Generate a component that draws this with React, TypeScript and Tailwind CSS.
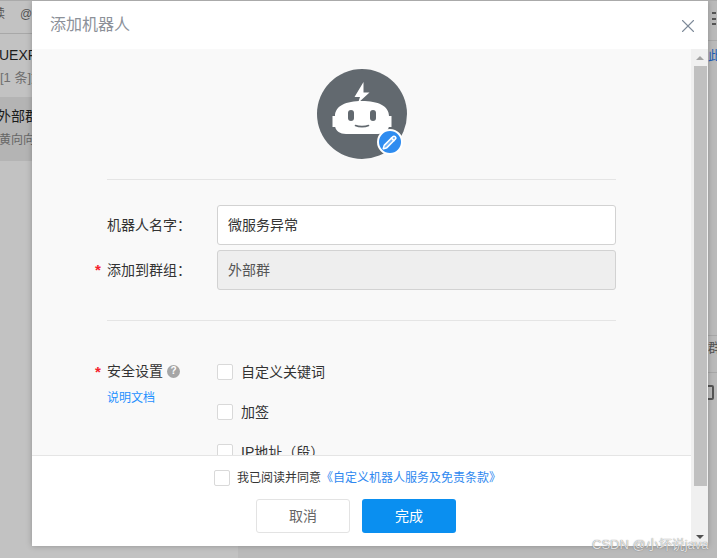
import { Pencil, X } from "lucide-react";

const font = { fontFamily: '"Liberation Sans", "Noto Sans CJK SC", sans-serif' };

function RobotAvatar() {
  return (
    <div className="relative h-[90px] w-[90px]">
      <svg viewBox="0 0 90 90" className="h-[90px] w-[90px]">
        <circle cx="45" cy="45" r="45" fill="#62696f" />
        <path d="M46.500 13 37.500 28H43L41 34 52.500 23.500H46.500Z" fill="#fff" />
        <path d="M18 47C18 37 29 32 45 32S72 37 72 47H74.500V58H71.800C71 62 67 65 61 65H29C23 65 19 62 18.200 58H15.500V47Z" fill="#fff" />
        <rect x="31" y="41" width="6" height="11" rx="3" fill="#62696f" />
        <rect x="53" y="41" width="6" height="11" rx="3" fill="#62696f" />
        <path d="M38.500 56.500C42 58 48 58 51.500 56.500" stroke="#62696f" strokeWidth="1.600" strokeLinecap="round" fill="none" />
      </svg>
      <div className="absolute left-[60px] top-[60px] flex h-[26px] w-[26px] items-center justify-center rounded-full border-2 border-white bg-[#2e8cf0]">
        <Pencil className="h-[15px] w-[15px] text-white" fill="#fff" fillOpacity={0.35} strokeWidth={2.4} />
      </div>
    </div>
  );
}

function Checkbox() {
  return <span className="block h-4 w-4 shrink-0 rounded-[2px] border border-[#d9d9d9] bg-white" />;
}

function Required() {
  return <span className="absolute left-[-12px] top-[-1px] text-[15px] font-bold text-[#f5222d]">*</span>;
}

function SecurityOption({ label }: { label: string }) {
  return (
    <div className="flex h-4 items-center gap-2 text-[14px] text-[#333]">
      <Checkbox />
      <span>{label}</span>
    </div>
  );
}

function BackgroundPage() {
  return (
    <div className="flex h-full w-full bg-[#bababa]">
      <div className="w-[238px] shrink-0 overflow-hidden bg-[#c2c2c2] text-[14px]">
        <div className="flex h-[33px] items-center gap-[15px] border-b border-[#a8a8a8] pb-[6px] text-[12px] text-[#555]">
          <span className="-ml-[7px]">读</span>
          <span>@</span>
        </div>
        <div className="h-[63px] whitespace-nowrap pt-[10px]">
          <div className="-ml-[1px] text-[14px] leading-[22px] text-[#1c1c1c]">UEXP</div>
          <div className="mt-[3px] text-[13px] leading-[18px] text-[#707070]">[1 条]文</div>
        </div>
        <div className="h-[64px] whitespace-nowrap bg-[#b4b4b4] pt-[9px]">
          <div className="-ml-[3px] text-[14px] text-[#1c1c1c]">外部群</div>
          <div className="mt-[4px] -ml-[1px] text-[12px] text-[#666]">黄向向</div>
        </div>
      </div>
      <div className="flex flex-1 flex-col text-[13px]">
        <div className="flex h-[40px] justify-end border-b border-[#a8a8a8] pr-[5px] pt-[11px]">
          <div className="flex h-[13px] w-[4px] flex-col justify-between">
            <span className="h-[2px] bg-[#555]" />
            <span className="h-[2px] bg-[#555]" />
            <span className="h-[2px] bg-[#555]" />
          </div>
        </div>
        <div className="mt-[5px] h-[289px] pl-[470px] text-[#1d5fb8]">此</div>
        <div className="h-[38px] border-y border-[#a8a8a8] pl-[470px] pt-[2px] text-[#555]">群</div>
        <div className="mt-[12px] ml-[466px] h-[15px] w-[10px] rounded-[2px] border-2 border-[#555]" />
      </div>
    </div>
  );
}

export default function App() {
  return (
    <div className="relative h-[558px] w-[717px] overflow-hidden border-t border-[#aaaaaa]" style={font}>
      <BackgroundPage />
      <div className="absolute left-[32px] top-0 flex h-[545px] w-[676px] flex-col bg-white shadow-[0_0_6px_rgba(0,0,0,0.25)]">
        <div className="flex h-[48px] shrink-0 items-center justify-between pl-[18px] pr-[9px]">
          <span className="text-[16px] text-[#8c9199]">添加机器人</span>
          <X className="mt-[2px] h-[22px] w-[22px] text-[#7d8a99]" strokeWidth={1.2} />
        </div>
        <div className="flex min-h-0 flex-1">
          <div className="flex min-w-0 flex-1 flex-col">
            <div className="min-h-0 flex-1 overflow-hidden bg-[#f9f9f9] px-[75px] pt-[20px]">
              <div className="flex justify-center pb-[20px]">
                <RobotAvatar />
              </div>
              <div className="h-px bg-[#e5e5e5]" />
              <div className="mt-[25px] flex h-[40px] items-center">
                <span className="w-[110px] text-[14px] text-[#333]">机器人名字：</span>
                <div className="flex h-[40px] flex-1 items-center rounded-[3px] border border-[#d2d2d2] bg-white px-[10px] text-[14px] text-[#333]">微服务异常</div>
              </div>
              <div className="mt-[5px] flex h-[40px] items-center">
                <span className="relative w-[110px] text-[14px] text-[#333]">
                  <Required />
                  添加到群组：
                </span>
                <div className="flex h-[40px] flex-1 items-center rounded-[3px] border border-[#d2d2d2] bg-[#eeeeee] px-[10px] text-[14px] text-[#555]">外部群</div>
              </div>
              <div className="mt-[30px] h-px bg-[#e5e5e5]" />
              <div className="mt-[41px] flex">
                <div className="w-[110px]">
                  <div className="relative flex h-[18px] items-center gap-[4px] text-[14px] text-[#333]">
                    <Required />
                    安全设置
                    <span className="flex h-[13px] w-[13px] items-center justify-center rounded-full bg-[#a6a6a6] text-[10px] font-bold leading-none text-white">?</span>
                  </div>
                  <div className="mt-[9px] text-[12px] text-[#1e90ff]">说明文档</div>
                </div>
                <div className="flex flex-col gap-[24px] pt-[2px]">
                  <SecurityOption label="自定义关键词" />
                  <SecurityOption label="加签" />
                  <SecurityOption label="IP地址（段）" />
                </div>
              </div>
            </div>
            <div className="h-[91px] shrink-0 border-t border-[#e5e5e5] bg-white pt-[13px]">
              <div className="flex h-[18px] items-center pl-[182px] text-[12px] text-[#333]">
                <Checkbox />
                <span className="ml-[7px]">我已阅读并同意</span>
                <span className="text-[#2e88f0]">《自定义机器人服务及免责条款》</span>
              </div>
              <div className="mt-[12px] flex gap-[12px] pl-[224px]">
                <button className="h-[34px] w-[94px] rounded-[3px] border border-[#e3e3e3] bg-white text-[14px] text-[#666]">取消</button>
                <button className="h-[34px] w-[94px] rounded-[3px] bg-[#0a8ff0] text-[14px] text-white">完成</button>
              </div>
            </div>
          </div>
          <div className="flex w-[17px] shrink-0 flex-col items-center bg-[#f0f0f0]">
            <div className="flex h-[17px] w-full items-center justify-center">
              <div className="h-0 w-0 border-x-[4px] border-b-[4px] border-x-transparent border-b-[#a3a3a3]" />
            </div>
            <div className="ml-[1px] h-[420px] w-[13px] bg-[#c0c0c0]" />
            <div className="flex flex-1 items-end justify-center pb-[7px]">
              <div className="h-0 w-0 border-x-[4px] border-t-[4px] border-x-transparent border-t-[#505050]" />
            </div>
          </div>
        </div>
      </div>
      <span className="absolute left-[592px] top-[536px] text-[13px] leading-[16px] text-white/80 [text-shadow:0_0_1px_#555]">CSDN @小坏说java</span>
    </div>
  );
}
